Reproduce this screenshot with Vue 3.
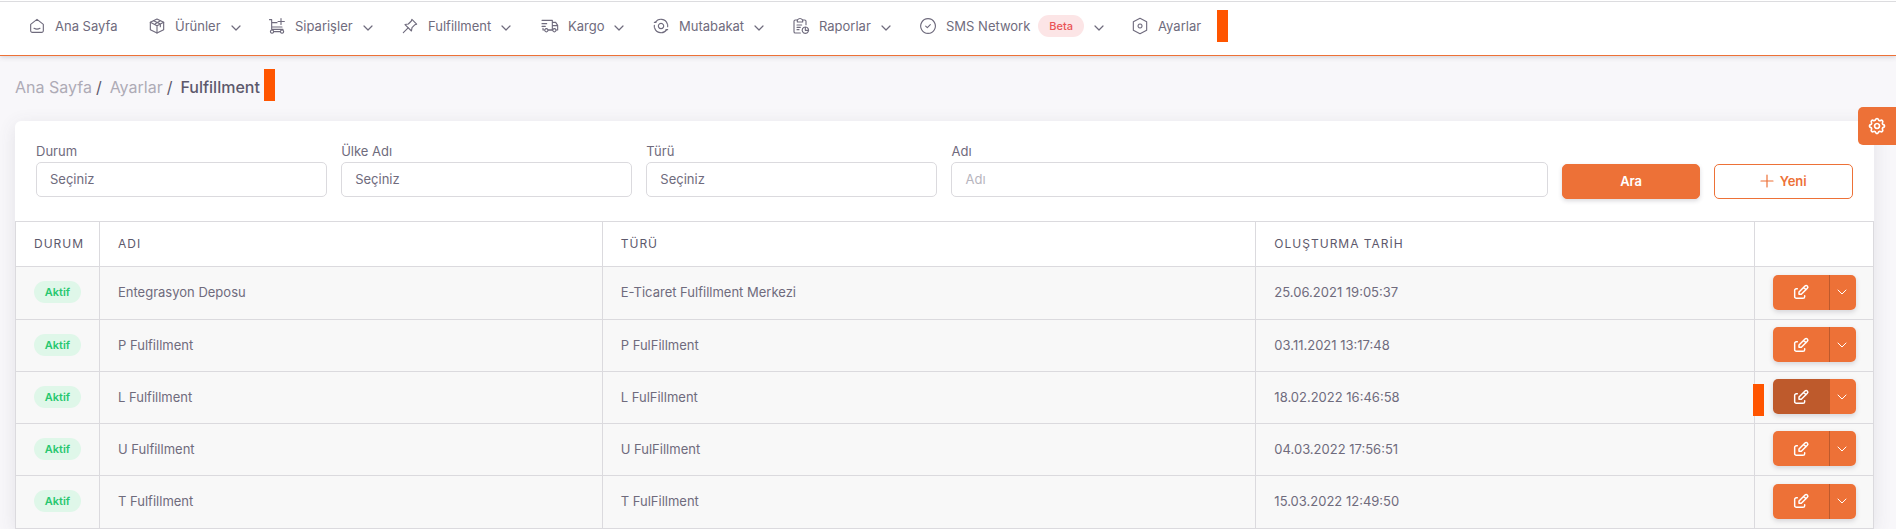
<script setup>
import { ref } from 'vue'

const nav = [
  { label: 'Ana Sayfa', icon: 'home', menu: false },
  { label: 'Ürünler', icon: 'box', menu: true },
  { label: 'Siparişler', icon: 'cart', menu: true },
  { label: 'Fulfillment', icon: 'pin', menu: true },
  { label: 'Kargo', icon: 'truck', menu: true },
  { label: 'Mutabakat', icon: 'sync', menu: true },
  { label: 'Raporlar', icon: 'report', menu: true },
  { label: 'SMS Network', icon: 'check', menu: true, badge: 'Beta' },
  { label: 'Ayarlar', icon: 'hex', menu: false, marked: true },
]

const icons = {
  home: ['M2.500 9.500 12 2l9.500 7.500V19a2.500 2.500 0 0 1-2.500 2.500H5A2.500 2.500 0 0 1 2.500 19z', 'M7.500 15.500q4.500 2.500 9 0'],
  box: ['M12 1.500l10 5v11l-10 5-10-5v-11z', 'M2 6.500l10 5 10-5M12 11.500v11M7 4l10 5v4M9.500 8.500l7-4'],
  cart: ['M.8 2.500H4v14.500h17M4 7h8M4 13.500h15.500M18 .8v9M13.500 5.300h9.500', 'M4.500 18a2.400 2.400 0 1 0 .1 0M19.500 18a2.400 2.400 0 1 0 .1 0M7 20.500h10'],
  pin: ['M14.800 2l7.200 7.200-2.500.8-4.500 4.500-.8 5L4.500 9.800l5-.8L14 4.500z', 'M9.200 14.800L2 22'],
  truck: ['M0 3.500h15.500V18H9.500M0 8.500h7M0 12.500h5M1.500 15.500V18h2M15.500 6.500h5l3 4.500v7h-2M15.500 11.500h8', 'M6.500 16a2.400 2.400 0 1 0 .1 0M18.500 16a2.400 2.400 0 1 0 .1 0M9 18h7'],
  sync: ['M3.500 6.500A10 10 0 0 1 21.500 9M20.500 17.500A10 10 0 0 1 2.500 15', 'M22 10v3M2 14v-3M2 6.500h2.500M19.500 17.500H22', 'M12 8a4 4 0 1 0 .1 0z'],
  report: ['M6 3H3.500a2 2 0 0 0-2 2v15.500a2 2 0 0 0 2 2H11M15 3h2.500a2 2 0 0 1 2 2v5', 'M6.500 3Q10.500-1.500 14.500 3v3h-8zM6 10.500h7M6 14h5M6 17.500h3', 'M18.500 13.500a4.800 4.800 0 1 0 .1 0zM18.500 13.500v5h5'],
  check: ['M12 1a11 11 0 1 0 .1 0z', 'M8.500 12.200l2.500 2.300 4.500-4.500'],
  hex: ['M12 .5l10 5.300v12.400l-10 5.300-10-5.300V5.800z', 'M12 9a3 3 0 1 0 .1 0z'],
}

const rows = [
  { name: 'Entegrasyon Deposu', type: 'E-Ticaret Fulfillment Merkezi', date: '25.06.2021 19:05:37' },
  { name: 'P Fulfillment', type: 'P FulFillment', date: '03.11.2021 13:17:48' },
  { name: 'L Fulfillment', type: 'L FulFillment', date: '18.02.2022 16:46:58', active: true },
  { name: 'U Fulfillment', type: 'U FulFillment', date: '04.03.2022 17:56:51' },
  { name: 'T Fulfillment', type: 'T FulFillment', date: '15.03.2022 12:49:50' },
]

const selects = [
  { id: 'durum', label: 'Durum' },
  { id: 'ulke', label: 'Ülke Adı' },
  { id: 'turu', label: 'Türü' },
]
const name = ref('')
</script>

<template>
  <div class="page">
    <nav class="nav">
      <a v-for="item in nav" :key="item.label" href="#" class="nav-item">
        <svg class="nav-icon" viewBox="0 0 24 24">
          <path v-for="d in icons[item.icon]" :key="d" :d="d" />
        </svg>
        <span>{{ item.label }}</span>
        <span v-if="item.badge" class="beta">{{ item.badge }}</span>
        <svg v-if="item.menu" class="chevron" viewBox="0 0 10 10"><path d="M1 3l4 4 4-4" /></svg>
        <i v-if="item.marked" class="marker"></i>
      </a>
    </nav>

    <div class="breadcrumb">
      <a href="#">Ana Sayfa</a><span class="sep">/</span>
      <a href="#">Ayarlar</a><span class="sep">/</span>
      <strong>Fulfillment</strong><i class="marker"></i>
    </div>

    <main class="card">
      <form class="filters" @submit.prevent>
        <div v-for="s in selects" :key="s.id" class="field">
          <label :for="s.id">{{ s.label }}</label>
          <select :id="s.id" class="control"><option>Seçiniz</option></select>
        </div>
        <div class="field wide">
          <label for="adi">Adı</label>
          <input id="adi" v-model="name" class="control" type="text" placeholder="Adı" />
        </div>
        <button class="btn solid" type="submit">Ara</button>
        <button class="btn outline" type="button">
          <svg viewBox="0 0 12 12"><path d="M6 0v12M0 6h12" /></svg>Yeni
        </button>
      </form>

      <table>
        <colgroup>
          <col class="c-status" /><col class="c-name" /><col class="c-type" /><col /><col class="c-act" />
        </colgroup>
        <thead>
          <tr><th>DURUM</th><th>ADI</th><th>TÜRÜ</th><th>OLUŞTURMA TARİH</th><th></th></tr>
        </thead>
        <tbody>
          <tr v-for="row in rows" :key="row.name">
            <td><span class="status">Aktif</span></td>
            <td>{{ row.name }}</td>
            <td>{{ row.type }}</td>
            <td>{{ row.date }}</td>
            <td class="actions">
              <i v-if="row.active" class="marker row-marker"></i>
              <div class="group">
                <button type="button" class="edit" :class="{ active: row.active }" aria-label="Düzenle">
                  <svg viewBox="0 0 24 24">
                    <path d="M6.500 7H5a2.500 2.500 0 0 0-2.500 2.500v9.500A2.500 2.500 0 0 0 5 21.500h10a2.500 2.500 0 0 0 2.500-2.500v-1.500" />
                    <path d="M9 15.500V12l9-9a2.400 2.400 0 0 1 3.500 3.500l-9 9zM16 5l3.500 3.500" />
                  </svg>
                </button>
                <button type="button" class="more" aria-label="Diğer işlemler">
                  <svg viewBox="0 0 10 10"><path d="M1 3l4 4 4-4" /></svg>
                </button>
              </div>
            </td>
          </tr>
        </tbody>
      </table>
    </main>

    <button class="settings" type="button" aria-label="Görünüm ayarları">
      <svg viewBox="0 0 24 24">
        <path d="M10.300 4.300c.4-1.800 3-1.800 3.400 0a1.700 1.700 0 0 0 2.600 1.100c1.500-1 3.300.8 2.400 2.300a1.700 1.700 0 0 0 1 2.600c1.800.4 1.800 3 0 3.400a1.700 1.700 0 0 0-1 2.600c.9 1.500-.9 3.300-2.400 2.400a1.700 1.700 0 0 0-2.600 1c-.4 1.800-3 1.800-3.400 0a1.700 1.700 0 0 0-2.600-1c-1.500.9-3.300-.9-2.400-2.400a1.700 1.700 0 0 0-1-2.600c-1.800-.4-1.800-3 0-3.400a1.700 1.700 0 0 0 1-2.600c-.9-1.500.9-3.300 2.400-2.400 1 .6 2.300.1 2.600-1z" />
        <path d="M12 9a3 3 0 1 0 .1 0z" />
      </svg>
    </button>
  </div>
</template>

<style>
body { background: #f8f7fa; }
</style>

<style scoped>
.page {
  position: relative;
  font-family: Inter, "Liberation Sans", sans-serif;
  font-size: 13px;
  line-height: 20px;
  color: #6f6b7d;
}
* { box-sizing: border-box; }
svg { fill: none; stroke: currentColor; stroke-linecap: round; stroke-linejoin: round; flex: none; overflow: visible; }
a { color: inherit; text-decoration: none; }
.nav {
  position: relative;
  display: grid;
  grid-template-columns: 120px 120px 133px 140px 111px 140px 127px 212px auto;
  align-items: center;
  height: 56px;
  padding: 0 29px 3px;
  background: #fff;
  border-bottom: 1px solid #ed7137;
  box-shadow: 0 1px 5px rgba(75, 70, 92, .22);
}
.nav::before { content: ""; position: absolute; inset: 1px 0 auto; height: 1px; background: #dcdcdf; }
.nav-item { display: flex; align-items: center; white-space: nowrap; }
.nav-icon { width: 16px; height: 16px; margin-right: 10px; stroke-width: 1.7; }
.chevron { width: 10px; height: 10px; margin: 3px 0 0 10px; stroke-width: 1.2; }
.beta {
  margin-left: 8px;
  padding: 0 11px;
  line-height: 22px;
  border-radius: 11px;
  background: #fce5e6;
  color: #ea5455;
  font-size: 11px;
  font-weight: 500;
}
.marker { display: block; width: 11px; height: 32px; background: #ff5500; flex: none; }
.nav .marker { margin-left: 16px; }
.breadcrumb {
  display: flex;
  align-items: center;
  height: 46px;
  margin-bottom: 19px;
  padding: 12px 15px 0;
  font-size: 16px;
  line-height: 24px;
}
.breadcrumb a, .breadcrumb strong, .sep { padding-top: 4px; }
.breadcrumb a { color: #aeabb6; }
.breadcrumb strong { font-weight: 500; color: #5d596c; }
.breadcrumb .marker { margin-left: 4px; }
.sep { margin: 0 8px 0 4px; color: #5d596c; }
.card {
  margin: 0 22px 0 15px;
  background: #fff;
  border-radius: 6px;
  box-shadow: 0 4px 18px rgba(75, 70, 92, .12);
}
.filters {
  display: grid;
  grid-template-columns: repeat(12, 1fr);
  column-gap: 14px;
  align-items: end;
  padding: 20px 21px 24px;
}
.field { grid-column: span 2; display: flex; flex-direction: column; }
.field.wide { grid-column: span 4; }
.field label { line-height: 21px; }
.control {
  appearance: none;
  width: 100%;
  height: 35px;
  padding: 0 13px 1px;
  border: 1px solid #dbdade;
  border-radius: 5px;
  background: #fff;
  color: inherit;
  font: inherit;
}
.control::placeholder { color: #b7b5be; opacity: 1; }
.btn {
  display: flex;
  align-items: center;
  justify-content: center;
  gap: 7px;
  height: 35px;
  margin-bottom: -2px;
  padding: 0 6px 2px;
  border: 1px solid #ed7137;
  border-radius: 5px;
  font: 600 13px/20px Inter, "Liberation Sans", sans-serif;
}
.btn svg { width: 12px; height: 12px; stroke-width: 1.2; }
.solid { background: #ed7137; color: #fff; box-shadow: 0 2px 4px rgba(75, 70, 92, .2); }
.outline { background: #fff; color: #ed7137; }
table { width: 100%; border-collapse: collapse; table-layout: fixed; }
.c-status { width: 84px; }
.c-name { width: calc(100% * 503 / 1859); }
.c-type { width: calc(100% * 654 / 1859); }
.c-act { width: 119px; }
th, td { border: 1px solid #dbdade; padding: 0 18px; text-align: left; font-weight: 400; }
th { height: 45px; font-size: 12px; letter-spacing: 1px; color: #5d596c; white-space: nowrap; }
td { height: 52px; padding-bottom: 2px; background: #f8f8f8; }
tr:first-child td, tr:last-child td { height: 53px; }
.status {
  display: block;
  width: 47px;
  line-height: 22px;
  border-radius: 11px;
  background: #dff7e9;
  color: #28c76f;
  font-size: 11px;
  font-weight: 600;
  text-align: center;
}
.actions { position: relative; }
.row-marker { position: absolute; left: -2px; top: 12px; }
.group { display: flex; width: 83px; height: 35px; border-radius: 5px; overflow: hidden; box-shadow: 0 2px 5px rgba(75, 70, 92, .2); }
.group button { display: flex; align-items: center; justify-content: center; padding: 0; border: 0; background: #ed7137; color: #fff; }
.group .edit { flex: 1; border-right: 1px solid #be5a2c; }
.group .edit.active { background: #be5a2c; }
.group .more { width: 26px; padding-right: 2px; }
.edit svg { width: 16px; height: 16px; stroke-width: 2.2; }
.more svg { width: 10px; height: 10px; stroke-width: 1; }
.settings {
  position: absolute;
  right: 0;
  top: 107px;
  display: flex;
  align-items: center;
  justify-content: center;
  width: 38px;
  height: 38px;
  padding: 0;
  border: 0;
  border-radius: 5px 0 0 5px;
  background: #ed7137;
  color: #fff;
}
.settings svg { width: 20px; height: 20px; stroke-width: 2; }
</style>
